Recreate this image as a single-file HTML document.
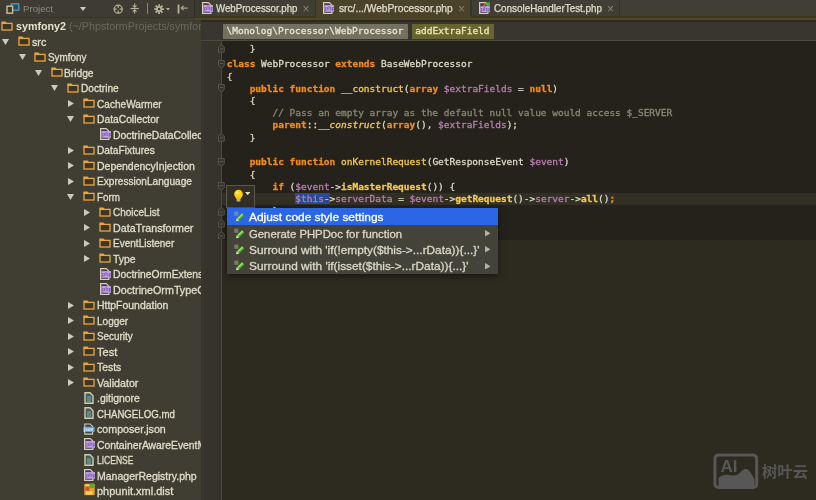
<!DOCTYPE html>
<html><head><meta charset="utf-8"><title>PhpStorm</title><style>
html,body{margin:0;padding:0}
body{width:816px;height:500px;overflow:hidden;background:#2d2a20;position:relative;font-family:'Liberation Sans', sans-serif}
.code{position:absolute;left:226.8px;height:12px;line-height:12px;font-family:'DejaVu Sans Mono', 'Liberation Mono', monospace;font-size:9.49px;color:#dcd8c6;white-space:pre;-webkit-text-stroke:0.3px}
.k{color:#f28b1d;font-weight:bold}
.f{color:#f5c84c}
.fb{color:#f5c84c;font-weight:bold}
.fi{color:#f5c84c;font-style:italic}
.v{color:#b87fb3}
.c{color:#8a8776}
</style></head><body>
<svg width="0" height="0" style="position:absolute">
<defs>
<symbol id="folder" viewBox="0 0 12 10">
  <path d="M0.35 2.4 V0.5 H4.4 L5.5 1.8 V2.4 Z" fill="#eea638"/>
  <rect x="1" y="2.4" width="10" height="6.6" fill="#3c3626" stroke="#eea638" stroke-width="1.3"/>
</symbol>
<symbol id="php" viewBox="0 0 11 12">
  <path d="M0.6 0.6 H6.3 L8.9 3.2 V11.4 H0.6 Z" fill="#453c4c" stroke="#d6cfc0" stroke-width="1.2"/>
  <rect x="1.4" y="3.1" width="9.6" height="6.6" fill="#c4a2e6"/>
  <text x="1.9" y="8.4" font-size="5.4" font-family="Liberation Sans, sans-serif" font-weight="bold" fill="#7654ac">php</text>
</symbol>
<symbol id="txt" viewBox="0 0 10 12">
  <path d="M1 0.8 H6 L9 3.8 V11.2 H1 Z" fill="#435c56" stroke="#d2cbb2" stroke-width="1.4"/>
  <path d="M3 5 H7 M3 7 H7 M3 9 H7" stroke="#8cbcb2" stroke-width="0.9"/>
</symbol>
<symbol id="json" viewBox="0 0 13 12">
  <path d="M1.9 0.6 H7.6 L10.2 3.2 V11.4 H1.9 Z" fill="#3f4a4c" stroke="#d2cbb2" stroke-width="1.2"/>
  <rect x="0.3" y="3.7" width="12.2" height="5.6" rx="1.2" fill="#58a6dc"/>
  <text x="1.1" y="8.1" font-size="4.8" font-family="Liberation Sans, sans-serif" font-weight="bold" fill="#e8f4fc">json</text>
</symbol>
<symbol id="xml" viewBox="0 0 11 12.5">
  <rect x="0.3" y="0.8" width="10.4" height="11.4" rx="0.8" fill="#f0a12a"/>
  <rect x="5.6" y="0.6" width="4.6" height="4.6" fill="#4fae3a"/>
  <rect x="1.4" y="3.6" width="4" height="4.2" fill="#dc4a2c"/>
  <rect x="2" y="8.4" width="6.4" height="3" fill="#f8d65c"/>
  <rect x="1.6" y="1.4" width="3.4" height="1.8" fill="#f8d65c"/>
</symbol>
<symbol id="test" viewBox="0 0 11 12">
  <path d="M0.6 0.6 H6.3 L8.9 3.2 V11.4 H0.6 Z" fill="#453c4c" stroke="#d6cfc0" stroke-width="1.2"/>
  <rect x="1.4" y="4.2" width="9.6" height="5.8" fill="#c4a2e6"/>
  <text x="1.9" y="9" font-size="5.2" font-family="Liberation Sans, sans-serif" font-weight="bold" fill="#7654ac">php</text>
  <path d="M3.6 4.6 L5.6 0.4 L7.2 4.6 Z" fill="#e0522c"/>
  <path d="M7 0.2 H10.8 V5.4 L9 3.2 L7.6 4.4 Z" fill="#3fae3a"/>
</symbol>
<symbol id="pencil" viewBox="0 0 11 11">
  <rect x="0.2" y="0.6" width="4.2" height="4.2" fill="#9a9b94" fill-opacity="0.6"/>
  <path d="M2 10.3 L2.8 7.2 L8 2 L10.4 4.4 L5.2 9.6 Z" fill="#45ad25"/>
  <path d="M2 10.3 L2.8 7.2 L5.2 9.6 Z" fill="#e6e0a8"/>
  <path d="M3.4 7.2 L8.1 2.5 L9.1 3.5 L4.4 8.2 Z" fill="#9be56c"/>
</symbol>
</defs></svg>

<div style="position:absolute;left:0;top:0;width:816px;height:500px;will-change:transform;filter:blur(0.3px)">
<div style="position:absolute;left:0;top:0;width:201px;height:500px;background:#403e33;overflow:hidden">
<div style="position:absolute;left:0px;top:0px;width:194px;height:17px;background:#3e3c32;"></div>
<div style="position:absolute;left:0px;top:16.5px;width:201px;height:1px;background:#35342c;"></div>
<svg style="position:absolute;left:6px;top:3px" width="14" height="11" viewBox="0 0 14 11">
<rect x="5.2" y="0.8" width="7.6" height="6.4" fill="#2f4a58" stroke="#4f9cc4" stroke-width="1.3"/>
<rect x="1" y="3.2" width="5.6" height="7" fill="#3b3a31" stroke="#cdbf98" stroke-width="1.4"/>
</svg>
<div style="transform:scaleX(0.9836);transform-origin:0 50%;position:absolute;left:22.8px;top:1.9000000000000004px;height:14px;line-height:14px;font-family:'Liberation Sans', sans-serif;font-size:9.8px;font-weight:normal;color:#8f8c79;white-space:pre;">Project</div>
<svg style="position:absolute;left:80px;top:7.2px" width="6" height="4" viewBox="0 0 6 4"><path d="M0 0 H6 L3.0 4 Z" fill="#d2ceba"/></svg>
<svg style="position:absolute;left:112.6px;top:3.5px" width="10.4" height="10.4" viewBox="0 0 11 11">
<circle cx="5.5" cy="5.5" r="4.3" fill="none" stroke="#b6b19a" stroke-width="1.3"/>
<path d="M5.5 1 V4 M5.5 7 V10 M1 5.5 H4 M7 5.5 H10" stroke="#b6b19a" stroke-width="1.4"/></svg>
<svg style="position:absolute;left:130.4px;top:3.2px" width="9.4" height="11" viewBox="0 0 10 12">
<path d="M0.5 6 H9.5" stroke="#b6b19a" stroke-width="1.3"/>
<path d="M5 0.5 V4.2 M5 11.5 V7.8" stroke="#b6b19a" stroke-width="1.2"/>
<path d="M3 2.6 L5 4.6 L7 2.6 M3 9.4 L5 7.4 L7 9.4" stroke="#b6b19a" stroke-width="1.1" fill="none"/></svg>
<div style="position:absolute;left:147.3px;top:2.5px;width:1.2px;height:11px;background:#8c8873;"></div>
<svg style="position:absolute;left:153.8px;top:3.8px" width="10.2" height="10.2" viewBox="0 0 11 11">
<g stroke="#b6b19a" stroke-width="1.9">
<path d="M5.5 0.3 V10.7 M0.3 5.5 H10.7 M1.8 1.8 L9.2 9.2 M9.2 1.8 L1.8 9.2"/></g>
<circle cx="5.5" cy="5.5" r="3.2" fill="#b6b19a"/><circle cx="5.5" cy="5.5" r="1.4" fill="#3e3c32"/></svg>
<svg style="position:absolute;left:166.3px;top:8px" width="4" height="2.6" viewBox="0 0 4 2.6"><path d="M0 0 H4 L2.0 2.6 Z" fill="#b6b19a"/></svg>
<svg style="position:absolute;left:176.8px;top:3.6px" width="11.2" height="10" viewBox="0 0 12 11">
<rect x="0.5" y="0.5" width="2" height="10" fill="#b6b19a"/>
<path d="M4.6 4.5 H11.5" stroke="#b6b19a" stroke-width="1.2"/>
<path d="M7 2.2 L4.6 4.5 L7 6.8" stroke="#b6b19a" stroke-width="1.2" fill="none"/></svg>
<div style="position:absolute;left:193.5px;top:0px;width:1px;height:18px;background:#2f2e26;"></div>
<div style="position:absolute;left:194.5px;top:0px;width:7px;height:18px;background:#3a3930;"></div>
<svg style="position:absolute;left:1.4px;top:20.5px" width="12" height="10"><use href="#folder"/></svg>
<div style="transform:scaleX(1.0019);transform-origin:0 50%;position:absolute;left:15.8px;top:19.3px;height:14px;line-height:14px;font-family:'Liberation Sans', sans-serif;font-size:10.7px;font-weight:bold;color:#e6e2ce;white-space:pre;">symfony2</div>
<div style="transform:scaleX(0.9946);transform-origin:0 50%;position:absolute;left:69.3px;top:19.3px;height:14px;line-height:14px;font-family:'Liberation Sans', sans-serif;font-size:10.8px;font-weight:normal;color:#6b695b;white-space:pre;">(~/PhpstormProjects/symfony2)</div>
<svg style="position:absolute;left:2px;top:38.9px" width="7" height="6" viewBox="0 0 7 6"><path d="M0 0 H7 L3.5 6 Z" fill="#cdcab7"/></svg>
<svg style="position:absolute;left:17.6px;top:36.0px" width="12" height="10"><use href="#folder"/></svg>
<div style="transform:scaleX(0.9926);transform-origin:0 50%;position:absolute;left:31.9px;top:34.75px;height:14px;line-height:14px;font-family:'Liberation Sans', sans-serif;font-size:10.8px;font-weight:normal;color:#e0dcc8;white-space:pre;-webkit-text-stroke:0.3px">src</div>
<svg style="position:absolute;left:18.6px;top:54.4px" width="7" height="6" viewBox="0 0 7 6"><path d="M0 0 H7 L3.5 6 Z" fill="#cdcab7"/></svg>
<svg style="position:absolute;left:34px;top:51.5px" width="12" height="10"><use href="#folder"/></svg>
<div style="transform:scaleX(0.9139);transform-origin:0 50%;position:absolute;left:48.4px;top:50.25px;height:14px;line-height:14px;font-family:'Liberation Sans', sans-serif;font-size:10.8px;font-weight:normal;color:#e0dcc8;white-space:pre;-webkit-text-stroke:0.3px">Symfony</div>
<svg style="position:absolute;left:35px;top:69.9px" width="7" height="6" viewBox="0 0 7 6"><path d="M0 0 H7 L3.5 6 Z" fill="#cdcab7"/></svg>
<svg style="position:absolute;left:50.5px;top:67.0px" width="12" height="10"><use href="#folder"/></svg>
<div style="transform:scaleX(0.9449);transform-origin:0 50%;position:absolute;left:64.4px;top:65.75px;height:14px;line-height:14px;font-family:'Liberation Sans', sans-serif;font-size:10.8px;font-weight:normal;color:#e0dcc8;white-space:pre;-webkit-text-stroke:0.3px">Bridge</div>
<svg style="position:absolute;left:51px;top:85.4px" width="7" height="6" viewBox="0 0 7 6"><path d="M0 0 H7 L3.5 6 Z" fill="#cdcab7"/></svg>
<svg style="position:absolute;left:66.6px;top:82.5px" width="12" height="10"><use href="#folder"/></svg>
<div style="transform:scaleX(0.9374);transform-origin:0 50%;position:absolute;left:81.0px;top:81.25px;height:14px;line-height:14px;font-family:'Liberation Sans', sans-serif;font-size:10.8px;font-weight:normal;color:#e0dcc8;white-space:pre;-webkit-text-stroke:0.3px">Doctrine</div>
<svg style="position:absolute;left:68.1px;top:100.0px" width="6" height="7" viewBox="0 0 6 7"><path d="M0 0 V7 L6 3.5 Z" fill="#cdcab7"/></svg>
<svg style="position:absolute;left:82.6px;top:98.0px" width="12" height="10"><use href="#folder"/></svg>
<div style="transform:scaleX(0.9335);transform-origin:0 50%;position:absolute;left:97.4px;top:96.75px;height:14px;line-height:14px;font-family:'Liberation Sans', sans-serif;font-size:10.8px;font-weight:normal;color:#e0dcc8;white-space:pre;-webkit-text-stroke:0.3px">CacheWarmer</div>
<svg style="position:absolute;left:67.3px;top:116.4px" width="7" height="6" viewBox="0 0 7 6"><path d="M0 0 H7 L3.5 6 Z" fill="#cdcab7"/></svg>
<svg style="position:absolute;left:82.6px;top:113.5px" width="12" height="10"><use href="#folder"/></svg>
<div style="transform:scaleX(0.9523);transform-origin:0 50%;position:absolute;left:97.4px;top:112.25px;height:14px;line-height:14px;font-family:'Liberation Sans', sans-serif;font-size:10.8px;font-weight:normal;color:#e0dcc8;white-space:pre;-webkit-text-stroke:0.3px">DataCollector</div>
<svg style="position:absolute;left:100.0px;top:128.1px" width="11" height="12"><use href="#php"/></svg>
<div style="transform:scaleX(0.9621);transform-origin:0 50%;position:absolute;left:113.4px;top:127.75px;height:14px;line-height:14px;font-family:'Liberation Sans', sans-serif;font-size:10.8px;font-weight:normal;color:#e0dcc8;white-space:pre;-webkit-text-stroke:0.3px">DoctrineDataCollector.php</div>
<svg style="position:absolute;left:68.1px;top:146.5px" width="6" height="7" viewBox="0 0 6 7"><path d="M0 0 V7 L6 3.5 Z" fill="#cdcab7"/></svg>
<svg style="position:absolute;left:82.6px;top:144.5px" width="12" height="10"><use href="#folder"/></svg>
<div style="transform:scaleX(0.9444);transform-origin:0 50%;position:absolute;left:97.4px;top:143.25px;height:14px;line-height:14px;font-family:'Liberation Sans', sans-serif;font-size:10.8px;font-weight:normal;color:#e0dcc8;white-space:pre;-webkit-text-stroke:0.3px">DataFixtures</div>
<svg style="position:absolute;left:68.1px;top:162.0px" width="6" height="7" viewBox="0 0 6 7"><path d="M0 0 V7 L6 3.5 Z" fill="#cdcab7"/></svg>
<svg style="position:absolute;left:82.6px;top:160.0px" width="12" height="10"><use href="#folder"/></svg>
<div style="transform:scaleX(0.9698);transform-origin:0 50%;position:absolute;left:97.4px;top:158.75px;height:14px;line-height:14px;font-family:'Liberation Sans', sans-serif;font-size:10.8px;font-weight:normal;color:#e0dcc8;white-space:pre;-webkit-text-stroke:0.3px">DependencyInjection</div>
<svg style="position:absolute;left:68.1px;top:177.5px" width="6" height="7" viewBox="0 0 6 7"><path d="M0 0 V7 L6 3.5 Z" fill="#cdcab7"/></svg>
<svg style="position:absolute;left:82.6px;top:175.5px" width="12" height="10"><use href="#folder"/></svg>
<div style="transform:scaleX(0.9354);transform-origin:0 50%;position:absolute;left:97.4px;top:174.25px;height:14px;line-height:14px;font-family:'Liberation Sans', sans-serif;font-size:10.8px;font-weight:normal;color:#e0dcc8;white-space:pre;-webkit-text-stroke:0.3px">ExpressionLanguage</div>
<svg style="position:absolute;left:67.3px;top:193.9px" width="7" height="6" viewBox="0 0 7 6"><path d="M0 0 H7 L3.5 6 Z" fill="#cdcab7"/></svg>
<svg style="position:absolute;left:82.6px;top:191.0px" width="12" height="10"><use href="#folder"/></svg>
<div style="transform:scaleX(0.9126);transform-origin:0 50%;position:absolute;left:97.4px;top:189.75px;height:14px;line-height:14px;font-family:'Liberation Sans', sans-serif;font-size:10.8px;font-weight:normal;color:#e0dcc8;white-space:pre;-webkit-text-stroke:0.3px">Form</div>
<svg style="position:absolute;left:84.1px;top:208.5px" width="6" height="7" viewBox="0 0 6 7"><path d="M0 0 V7 L6 3.5 Z" fill="#cdcab7"/></svg>
<svg style="position:absolute;left:98.6px;top:206.5px" width="12" height="10"><use href="#folder"/></svg>
<div style="transform:scaleX(0.9242);transform-origin:0 50%;position:absolute;left:113.4px;top:205.25px;height:14px;line-height:14px;font-family:'Liberation Sans', sans-serif;font-size:10.8px;font-weight:normal;color:#e0dcc8;white-space:pre;-webkit-text-stroke:0.3px">ChoiceList</div>
<svg style="position:absolute;left:84.1px;top:224.0px" width="6" height="7" viewBox="0 0 6 7"><path d="M0 0 V7 L6 3.5 Z" fill="#cdcab7"/></svg>
<svg style="position:absolute;left:98.6px;top:222.0px" width="12" height="10"><use href="#folder"/></svg>
<div style="transform:scaleX(0.9901);transform-origin:0 50%;position:absolute;left:113.4px;top:220.75px;height:14px;line-height:14px;font-family:'Liberation Sans', sans-serif;font-size:10.8px;font-weight:normal;color:#e0dcc8;white-space:pre;-webkit-text-stroke:0.3px">DataTransformer</div>
<svg style="position:absolute;left:84.1px;top:239.5px" width="6" height="7" viewBox="0 0 6 7"><path d="M0 0 V7 L6 3.5 Z" fill="#cdcab7"/></svg>
<svg style="position:absolute;left:98.6px;top:237.5px" width="12" height="10"><use href="#folder"/></svg>
<div style="transform:scaleX(0.9283);transform-origin:0 50%;position:absolute;left:113.4px;top:236.25px;height:14px;line-height:14px;font-family:'Liberation Sans', sans-serif;font-size:10.8px;font-weight:normal;color:#e0dcc8;white-space:pre;-webkit-text-stroke:0.3px">EventListener</div>
<svg style="position:absolute;left:84.1px;top:255.0px" width="6" height="7" viewBox="0 0 6 7"><path d="M0 0 V7 L6 3.5 Z" fill="#cdcab7"/></svg>
<svg style="position:absolute;left:98.6px;top:253.0px" width="12" height="10"><use href="#folder"/></svg>
<div style="transform:scaleX(0.9649);transform-origin:0 50%;position:absolute;left:113.4px;top:251.75px;height:14px;line-height:14px;font-family:'Liberation Sans', sans-serif;font-size:10.8px;font-weight:normal;color:#e0dcc8;white-space:pre;-webkit-text-stroke:0.3px">Type</div>
<svg style="position:absolute;left:100.0px;top:267.6px" width="11" height="12"><use href="#php"/></svg>
<div style="transform:scaleX(0.9582);transform-origin:0 50%;position:absolute;left:113.4px;top:267.25px;height:14px;line-height:14px;font-family:'Liberation Sans', sans-serif;font-size:10.8px;font-weight:normal;color:#e0dcc8;white-space:pre;-webkit-text-stroke:0.3px">DoctrineOrmExtension.php</div>
<svg style="position:absolute;left:100.0px;top:283.1px" width="11" height="12"><use href="#php"/></svg>
<div style="transform:scaleX(0.9952);transform-origin:0 50%;position:absolute;left:113.4px;top:282.75px;height:14px;line-height:14px;font-family:'Liberation Sans', sans-serif;font-size:10.8px;font-weight:normal;color:#e0dcc8;white-space:pre;-webkit-text-stroke:0.3px">DoctrineOrmTypeGuesser.php</div>
<svg style="position:absolute;left:68.1px;top:301.5px" width="6" height="7" viewBox="0 0 6 7"><path d="M0 0 V7 L6 3.5 Z" fill="#cdcab7"/></svg>
<svg style="position:absolute;left:82.6px;top:299.5px" width="12" height="10"><use href="#folder"/></svg>
<div style="transform:scaleX(0.9658);transform-origin:0 50%;position:absolute;left:97.4px;top:298.25px;height:14px;line-height:14px;font-family:'Liberation Sans', sans-serif;font-size:10.8px;font-weight:normal;color:#e0dcc8;white-space:pre;-webkit-text-stroke:0.3px">HttpFoundation</div>
<svg style="position:absolute;left:68.1px;top:317.0px" width="6" height="7" viewBox="0 0 6 7"><path d="M0 0 V7 L6 3.5 Z" fill="#cdcab7"/></svg>
<svg style="position:absolute;left:82.6px;top:315.0px" width="12" height="10"><use href="#folder"/></svg>
<div style="transform:scaleX(0.9279);transform-origin:0 50%;position:absolute;left:97.4px;top:313.75px;height:14px;line-height:14px;font-family:'Liberation Sans', sans-serif;font-size:10.8px;font-weight:normal;color:#e0dcc8;white-space:pre;-webkit-text-stroke:0.3px">Logger</div>
<svg style="position:absolute;left:68.1px;top:332.5px" width="6" height="7" viewBox="0 0 6 7"><path d="M0 0 V7 L6 3.5 Z" fill="#cdcab7"/></svg>
<svg style="position:absolute;left:82.6px;top:330.5px" width="12" height="10"><use href="#folder"/></svg>
<div style="transform:scaleX(0.9150);transform-origin:0 50%;position:absolute;left:97.4px;top:329.25px;height:14px;line-height:14px;font-family:'Liberation Sans', sans-serif;font-size:10.8px;font-weight:normal;color:#e0dcc8;white-space:pre;-webkit-text-stroke:0.3px">Security</div>
<svg style="position:absolute;left:68.1px;top:348.0px" width="6" height="7" viewBox="0 0 6 7"><path d="M0 0 V7 L6 3.5 Z" fill="#cdcab7"/></svg>
<svg style="position:absolute;left:82.6px;top:346.0px" width="12" height="10"><use href="#folder"/></svg>
<div style="transform:scaleX(1.0196);transform-origin:0 50%;position:absolute;left:97.4px;top:344.75px;height:14px;line-height:14px;font-family:'Liberation Sans', sans-serif;font-size:10.8px;font-weight:normal;color:#e0dcc8;white-space:pre;-webkit-text-stroke:0.3px">Test</div>
<svg style="position:absolute;left:68.1px;top:363.5px" width="6" height="7" viewBox="0 0 6 7"><path d="M0 0 V7 L6 3.5 Z" fill="#cdcab7"/></svg>
<svg style="position:absolute;left:82.6px;top:361.5px" width="12" height="10"><use href="#folder"/></svg>
<div style="transform:scaleX(0.9602);transform-origin:0 50%;position:absolute;left:97.4px;top:360.25px;height:14px;line-height:14px;font-family:'Liberation Sans', sans-serif;font-size:10.8px;font-weight:normal;color:#e0dcc8;white-space:pre;-webkit-text-stroke:0.3px">Tests</div>
<svg style="position:absolute;left:68.1px;top:379.0px" width="6" height="7" viewBox="0 0 6 7"><path d="M0 0 V7 L6 3.5 Z" fill="#cdcab7"/></svg>
<svg style="position:absolute;left:82.6px;top:377.0px" width="12" height="10"><use href="#folder"/></svg>
<div style="transform:scaleX(0.9901);transform-origin:0 50%;position:absolute;left:97.4px;top:375.75px;height:14px;line-height:14px;font-family:'Liberation Sans', sans-serif;font-size:10.8px;font-weight:normal;color:#e0dcc8;white-space:pre;-webkit-text-stroke:0.3px">Validator</div>
<svg style="position:absolute;left:83.6px;top:391.8px" width="10" height="12"><use href="#txt"/></svg>
<div style="transform:scaleX(0.9657);transform-origin:0 50%;position:absolute;left:97.4px;top:391.25px;height:14px;line-height:14px;font-family:'Liberation Sans', sans-serif;font-size:10.8px;font-weight:normal;color:#e0dcc8;white-space:pre;-webkit-text-stroke:0.3px">.gitignore</div>
<svg style="position:absolute;left:83.6px;top:407.3px" width="10" height="12"><use href="#txt"/></svg>
<div style="transform:scaleX(0.8943);transform-origin:0 50%;position:absolute;left:97.4px;top:406.75px;height:14px;line-height:14px;font-family:'Liberation Sans', sans-serif;font-size:10.8px;font-weight:normal;color:#e0dcc8;white-space:pre;-webkit-text-stroke:0.3px">CHANGELOG.md</div>
<svg style="position:absolute;left:83.39999999999999px;top:422.6px" width="12.2" height="12"><use href="#json"/></svg>
<div style="transform:scaleX(0.9882);transform-origin:0 50%;position:absolute;left:97.4px;top:422.25px;height:14px;line-height:14px;font-family:'Liberation Sans', sans-serif;font-size:10.8px;font-weight:normal;color:#e0dcc8;white-space:pre;-webkit-text-stroke:0.3px">composer.json</div>
<svg style="position:absolute;left:84.0px;top:438.1px" width="11" height="12"><use href="#php"/></svg>
<div style="transform:scaleX(0.9586);transform-origin:0 50%;position:absolute;left:97.4px;top:437.75px;height:14px;line-height:14px;font-family:'Liberation Sans', sans-serif;font-size:10.8px;font-weight:normal;color:#e0dcc8;white-space:pre;-webkit-text-stroke:0.3px">ContainerAwareEventManager.php</div>
<svg style="position:absolute;left:83.6px;top:453.8px" width="10" height="12"><use href="#txt"/></svg>
<div style="transform:scaleX(0.7878);transform-origin:0 50%;position:absolute;left:97.4px;top:453.25px;height:14px;line-height:14px;font-family:'Liberation Sans', sans-serif;font-size:10.8px;font-weight:normal;color:#e0dcc8;white-space:pre;-webkit-text-stroke:0.3px">LICENSE</div>
<svg style="position:absolute;left:84.0px;top:469.1px" width="11" height="12"><use href="#php"/></svg>
<div style="transform:scaleX(0.9733);transform-origin:0 50%;position:absolute;left:97.4px;top:468.75px;height:14px;line-height:14px;font-family:'Liberation Sans', sans-serif;font-size:10.8px;font-weight:normal;color:#e0dcc8;white-space:pre;-webkit-text-stroke:0.3px">ManagerRegistry.php</div>
<svg style="position:absolute;left:84.0px;top:483.4px" width="11" height="12.5"><use href="#xml"/></svg>
<div style="transform:scaleX(1.0171);transform-origin:0 50%;position:absolute;left:97.4px;top:484.25px;height:14px;line-height:14px;font-family:'Liberation Sans', sans-serif;font-size:10.8px;font-weight:normal;color:#e0dcc8;white-space:pre;-webkit-text-stroke:0.3px">phpunit.xml.dist</div>
</div>
<div style="position:absolute;left:201px;top:0px;width:3px;height:500px;background:#38362c;"></div>
<div style="position:absolute;left:204px;top:0px;width:612px;height:500px;background:#2d2a20;"></div>
<div style="position:absolute;left:204px;top:41px;width:612px;height:199px;background:#24221a;"></div>
<div style="position:absolute;left:204px;top:41px;width:17.5px;height:459px;background:#36342a;"></div>
<div style="position:absolute;left:222px;top:192.6px;width:594px;height:12.2px;background:#322f25;"></div>
<div style="position:absolute;left:201px;top:0px;width:615px;height:16.2px;background:#413f35;"></div>
<div style="position:absolute;left:194.5px;top:16.2px;width:621.5px;height:2.1px;background:#3c371f;"></div>
<div style="position:absolute;left:194.5px;top:18.3px;width:621.5px;height:2.0px;background:#4f4627;"></div>
<div style="position:absolute;left:201px;top:20.3px;width:615px;height:1.5px;background:#2f2a19;"></div>
<div style="position:absolute;left:201px;top:21.8px;width:615px;height:18.5px;background:#38362e;"></div>
<div style="position:absolute;left:201px;top:40.2px;width:615px;height:1px;background:#4d4b40;"></div>
<div style="position:absolute;left:316px;top:0px;width:155px;height:18.4px;background:#4b4329;"></div>
<div style="position:absolute;left:314.8px;top:0px;width:1.4px;height:16.2px;background:#33322a;"></div>
<div style="position:absolute;left:470.3px;top:0px;width:1.4px;height:16.2px;background:#33322a;"></div>
<div style="position:absolute;left:618.9px;top:0px;width:1.4px;height:16.2px;background:#36352a;"></div>
<svg style="position:absolute;left:201.8px;top:2px" width="11" height="12"><use href="#php"/></svg>
<div style="transform:scaleX(0.9388);transform-origin:0 50%;position:absolute;left:215.5px;top:1.6999999999999993px;height:14px;line-height:14px;font-family:'Liberation Sans', sans-serif;font-size:10.3px;font-weight:normal;color:#e0dcca;white-space:pre;-webkit-text-stroke:0.25px">WebProcessor.php</div>
<div style="position:absolute;left:302.4px;top:1.5px;height:14px;line-height:14px;font-family:'Liberation Sans', sans-serif;font-size:12px;font-weight:normal;color:#868372;white-space:pre;">×</div>
<svg style="position:absolute;left:322.6px;top:2px" width="11" height="12"><use href="#php"/></svg>
<div style="transform:scaleX(0.9900);transform-origin:0 50%;position:absolute;left:338.6px;top:1.6999999999999993px;height:14px;line-height:14px;font-family:'Liberation Sans', sans-serif;font-size:10.3px;font-weight:normal;color:#e0dcca;white-space:pre;-webkit-text-stroke:0.25px">src/.../WebProcessor.php</div>
<div style="position:absolute;left:458.0px;top:1.5px;height:14px;line-height:14px;font-family:'Liberation Sans', sans-serif;font-size:12px;font-weight:normal;color:#868372;white-space:pre;">×</div>
<svg style="position:absolute;left:479px;top:2px" width="11" height="12"><use href="#test"/></svg>
<div style="transform:scaleX(0.9577);transform-origin:0 50%;position:absolute;left:493.5px;top:1.6999999999999993px;height:14px;line-height:14px;font-family:'Liberation Sans', sans-serif;font-size:10.3px;font-weight:normal;color:#e0dcca;white-space:pre;-webkit-text-stroke:0.25px">ConsoleHandlerTest.php</div>
<div style="position:absolute;left:606.9px;top:1.5px;height:14px;line-height:14px;font-family:'Liberation Sans', sans-serif;font-size:12px;font-weight:normal;color:#868372;white-space:pre;">×</div>
<div style="position:absolute;left:223px;top:23.8px;width:185px;height:15.4px;background:#757160;"></div>
<div style="position:absolute;left:226.5px;top:25.2px;height:12px;line-height:12px;font-family:'DejaVu Sans Mono', 'Liberation Mono', monospace;font-size:9.49px;font-weight:normal;color:#e8e4d2;white-space:pre;-webkit-text-stroke:0.3px">\Monolog\Processor\WebProcessor</div>
<div style="position:absolute;left:412px;top:23.8px;width:82px;height:15.4px;background:#676430;"></div>
<div style="position:absolute;left:415.3px;top:25.2px;height:12px;line-height:12px;font-family:'DejaVu Sans Mono', 'Liberation Mono', monospace;font-size:9.49px;font-weight:normal;color:#f0e8b4;white-space:pre;-webkit-text-stroke:0.3px">addExtraField</div>
<div style="position:absolute;left:221.3px;top:41px;width:1px;height:459px;background:#4e4b3d;"></div>
<svg style="position:absolute;left:218.4px;top:44.400000000000006px" width="6.8" height="8.6" viewBox="0 0 6.8 8.6"><path d="M0.5 8.1 V3 L3.4 0.5 L6.3 3 V8.1 Z" fill="#36342a" stroke="#5b594e" stroke-width="0.9"/><path d="M2 5.0 H4.8" stroke="#646257" stroke-width="0.9"/></svg>
<svg style="position:absolute;left:218.4px;top:59.8px" width="6.8" height="8.6" viewBox="0 0 6.8 8.6"><path d="M0.5 0.5 V5.6 L3.4 8.1 L6.3 5.6 V0.5 Z" fill="#36342a" stroke="#5b594e" stroke-width="0.9"/><path d="M2 3.5999999999999996 H4.8" stroke="#646257" stroke-width="0.9"/></svg>
<svg style="position:absolute;left:218.4px;top:84.4px" width="6.8" height="8.6" viewBox="0 0 6.8 8.6"><path d="M0.5 0.5 V5.6 L3.4 8.1 L6.3 5.6 V0.5 Z" fill="#36342a" stroke="#5b594e" stroke-width="0.9"/><path d="M2 3.5999999999999996 H4.8" stroke="#646257" stroke-width="0.9"/></svg>
<svg style="position:absolute;left:218.4px;top:133.2px" width="6.8" height="8.6" viewBox="0 0 6.8 8.6"><path d="M0.5 8.1 V3 L3.4 0.5 L6.3 3 V8.1 Z" fill="#36342a" stroke="#5b594e" stroke-width="0.9"/><path d="M2 5.0 H4.8" stroke="#646257" stroke-width="0.9"/></svg>
<svg style="position:absolute;left:218.4px;top:157.7px" width="6.8" height="8.6" viewBox="0 0 6.8 8.6"><path d="M0.5 0.5 V5.6 L3.4 8.1 L6.3 5.6 V0.5 Z" fill="#36342a" stroke="#5b594e" stroke-width="0.9"/><path d="M2 3.5999999999999996 H4.8" stroke="#646257" stroke-width="0.9"/></svg>
<svg style="position:absolute;left:218.4px;top:181.7px" width="6.8" height="8.6" viewBox="0 0 6.8 8.6"><path d="M0.5 0.5 V5.6 L3.4 8.1 L6.3 5.6 V0.5 Z" fill="#36342a" stroke="#5b594e" stroke-width="0.9"/><path d="M2 3.5999999999999996 H4.8" stroke="#646257" stroke-width="0.9"/></svg>
<svg style="position:absolute;left:218.4px;top:207.1px" width="6.8" height="8.6" viewBox="0 0 6.8 8.6"><path d="M0.5 8.1 V3 L3.4 0.5 L6.3 3 V8.1 Z" fill="#36342a" stroke="#5b594e" stroke-width="0.9"/><path d="M2 5.0 H4.8" stroke="#646257" stroke-width="0.9"/></svg>
<svg style="position:absolute;left:218.4px;top:219.2px" width="6.8" height="8.6" viewBox="0 0 6.8 8.6"><path d="M0.5 8.1 V3 L3.4 0.5 L6.3 3 V8.1 Z" fill="#36342a" stroke="#5b594e" stroke-width="0.9"/><path d="M2 5.0 H4.8" stroke="#646257" stroke-width="0.9"/></svg>
<svg style="position:absolute;left:218.4px;top:230.7px" width="6.8" height="8.6" viewBox="0 0 6.8 8.6"><path d="M0.5 8.1 V3 L3.4 0.5 L6.3 3 V8.1 Z" fill="#36342a" stroke="#5b594e" stroke-width="0.9"/><path d="M2 5.0 H4.8" stroke="#646257" stroke-width="0.9"/></svg>
<div class="code" style="top:42.6px">    }</div>
<div class="code" style="top:58.3px"><span class="k">class</span> WebProcessor <span class="k">extends</span> BaseWebProcessor</div>
<div class="code" style="top:70.5px">{</div>
<div class="code" style="top:82.7px">    <span class="k">public function</span> <span class="f">__construct</span>(<span class="k">array</span> <span class="v">$extraFields</span> = <span class="k">null</span>)</div>
<div class="code" style="top:94.9px">    {</div>
<div class="code" style="top:107.1px">        <span class="c">// Pass an empty array as the default null value would access $_SERVER</span></div>
<div class="code" style="top:119.3px">        <span class="k">parent</span>::<span class="fi">__construct</span>(<span class="k">array</span>(), <span class="v">$extraFields</span>);</div>
<div class="code" style="top:131.5px">    }</div>
<div class="code" style="top:156.3px">    <span class="k">public function</span> <span class="f">onKernelRequest</span>(GetResponseEvent <span class="v">$event</span>)</div>
<div class="code" style="top:168.5px">    {</div>
<div class="code" style="top:180.8px">        <span class="k">if</span> (<span class="v">$event</span>-&gt;<span class="fb">isMasterRequest</span>()) {</div>
<div class="code" style="top:193.1px">            <span style="background:#2a4a95;padding:0.4px 0"><span class="v">$this</span>-</span>&gt;<span class="v">serverData</span> = <span class="v">$event</span>-&gt;<span class="fb">getRequest</span>()-&gt;<span class="v">server</span>-&gt;<span class="fb">all</span>()<span class="k">;</span></div>
<div class="code" style="top:205.3px">        }</div>
<div style="position:absolute;left:226.3px;top:185px;width:28.8px;height:22.8px;background:#312f26;box-sizing:border-box;border:1px solid #5a584b"></div>
<svg style="position:absolute;left:232.6px;top:189.2px" width="11" height="14.5" viewBox="0 0 12 16">
<circle cx="6" cy="5.6" r="4.8" fill="#fbd30c"/>
<path d="M3.4 8.5 H8.6 V11 H3.4 Z" fill="#f4c410"/>
<rect x="3.9" y="11" width="4.2" height="2.8" fill="#c4b088"/>
<circle cx="4.8" cy="4.2" r="1.7" fill="#ffee70"/>
</svg>
<svg style="position:absolute;left:245.0px;top:192.0px" width="5.4" height="3.2" viewBox="0 0 5.4 3.2"><path d="M0 0 H5.4 L2.7 3.2 Z" fill="#e4e0cc"/></svg>
<div style="position:absolute;left:226.5px;top:208.2px;width:271.5px;height:66.2px;background:#444339;box-shadow:0 2px 6px rgba(0,0,0,.5)"></div>
<div style="position:absolute;left:226.5px;top:208.1px;width:271.5px;height:17.4px;background:#2a66e6;"></div>
<svg style="position:absolute;left:234px;top:211.4px" width="11" height="11"><use href="#pencil"/></svg>
<div style="transform:scaleX(1.0744);transform-origin:0 50%;position:absolute;left:249.3px;top:210.2px;height:14px;line-height:14px;font-family:'Liberation Sans', sans-serif;font-size:11.1px;font-weight:normal;color:#ffffff;white-space:pre;-webkit-text-stroke:0.3px">Adjust code style settings</div>
<svg style="position:absolute;left:234px;top:227.70000000000002px" width="11" height="11"><use href="#pencil"/></svg>
<div style="transform:scaleX(1.0211);transform-origin:0 50%;position:absolute;left:249.3px;top:226.5px;height:14px;line-height:14px;font-family:'Liberation Sans', sans-serif;font-size:11.1px;font-weight:normal;color:#dcd8c6;white-space:pre;-webkit-text-stroke:0.3px">Generate PHPDoc for function</div>
<svg style="position:absolute;left:484.8px;top:230.10000000000002px" width="5.6" height="6.6" viewBox="0 0 5.6 6.6"><path d="M0 0 V6.6 L5.6 3.3 Z" fill="#b3b09e"/></svg>
<svg style="position:absolute;left:234px;top:244.0px" width="11" height="11"><use href="#pencil"/></svg>
<div style="transform:scaleX(1.0670);transform-origin:0 50%;position:absolute;left:249.3px;top:242.79999999999998px;height:14px;line-height:14px;font-family:'Liberation Sans', sans-serif;font-size:11.1px;font-weight:normal;color:#dcd8c6;white-space:pre;-webkit-text-stroke:0.3px">Surround with &#x27;if(!empty($this-&gt;...rData)){...}&#x27;</div>
<svg style="position:absolute;left:484.8px;top:246.4px" width="5.6" height="6.6" viewBox="0 0 5.6 6.6"><path d="M0 0 V6.6 L5.6 3.3 Z" fill="#b3b09e"/></svg>
<svg style="position:absolute;left:234px;top:260.29999999999995px" width="11" height="11"><use href="#pencil"/></svg>
<div style="transform:scaleX(1.0679);transform-origin:0 50%;position:absolute;left:249.3px;top:259.09999999999997px;height:14px;line-height:14px;font-family:'Liberation Sans', sans-serif;font-size:11.1px;font-weight:normal;color:#dcd8c6;white-space:pre;-webkit-text-stroke:0.3px">Surround with &#x27;if(isset($this-&gt;...rData)){...}&#x27;</div>
<svg style="position:absolute;left:484.8px;top:262.7px" width="5.6" height="6.6" viewBox="0 0 5.6 6.6"><path d="M0 0 V6.6 L5.6 3.3 Z" fill="#b3b09e"/></svg>
<svg style="position:absolute;left:713px;top:453px" width="46" height="37" viewBox="0 0 46 37">
<rect x="1.9" y="2.1" width="41.8" height="32.4" rx="3.6" fill="none" stroke="#575757" stroke-width="3"/>
<path d="M5.5 33 V24.4 C8.5 22.6 11 21.4 14.5 21.7 C18.5 22 20.5 23.4 24 21.8 C27.5 20 29.5 15.6 32.8 15.9 C36.5 16.2 39 21.5 41.5 26.5 V33 Z" fill="#575757"/>
<text x="7.6" y="19.4" font-family="Liberation Sans, sans-serif" font-weight="bold" font-size="17" fill="#575757">AI</text>
</svg>
<div style="transform:scaleX(1.0096);transform-origin:0 50%;position:absolute;left:762.3px;top:462.2px;height:20px;line-height:20px;font-family:'Liberation Sans', 'Noto Sans CJK SC', sans-serif;font-size:15.2px;font-weight:bold;color:#575757;white-space:pre;">树叶云</div>
</div>
</body></html>
